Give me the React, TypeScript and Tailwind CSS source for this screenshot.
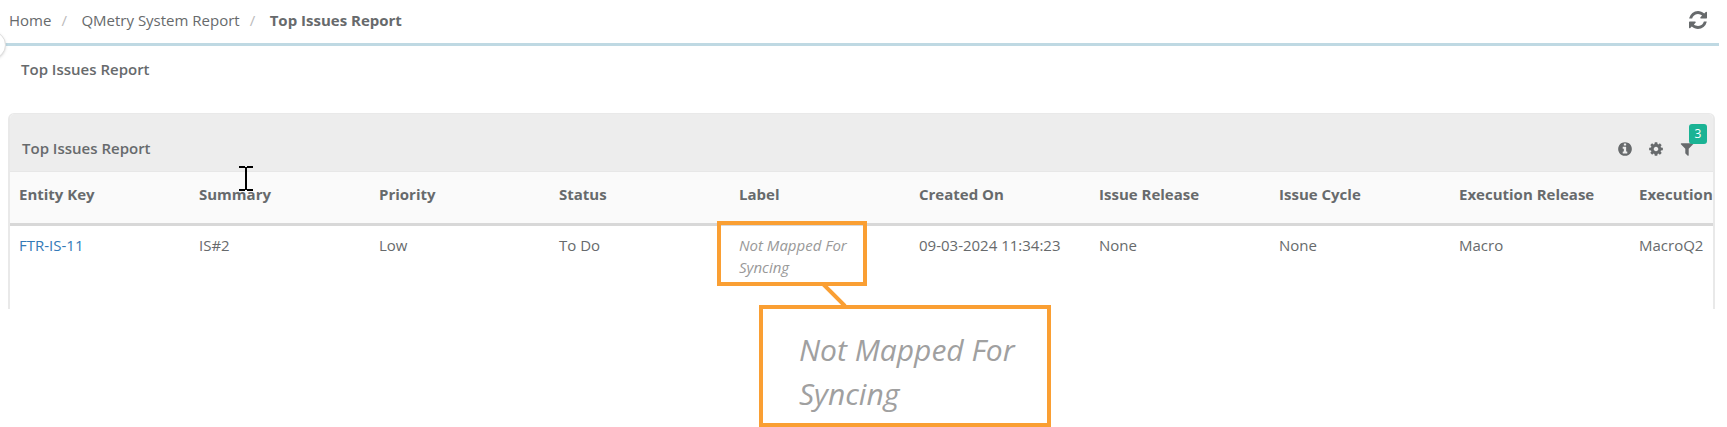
import type { ReactNode } from 'react';

type Column = { key: string; label: string };

const columns: Column[] = [
  { key: 'entityKey', label: 'Entity Key' },
  { key: 'summary', label: 'Summary' },
  { key: 'priority', label: 'Priority' },
  { key: 'status', label: 'Status' },
  { key: 'label', label: 'Label' },
  { key: 'createdOn', label: 'Created On' },
  { key: 'issueRelease', label: 'Issue Release' },
  { key: 'issueCycle', label: 'Issue Cycle' },
  { key: 'executionRelease', label: 'Execution Release' },
  { key: 'execution', label: 'Execution' },
];

const issues: Record<string, string>[] = [
  {
    entityKey: 'FTR-IS-11',
    summary: 'IS#2',
    priority: 'Low',
    status: 'To Do',
    label: 'Not Mapped For Syncing',
    createdOn: '09-03-2024 11:34:23',
    issueRelease: 'None',
    issueCycle: 'None',
    executionRelease: 'Macro',
    execution: 'MacroQ2',
  },
];

function Icon({ path, viewBox = '0 0 1792 1792', className }: { path: string; viewBox?: string; className: string }) {
  return (
    <svg className={className} viewBox={viewBox} fill="currentColor" aria-hidden="true">
      <path d={path} />
    </svg>
  );
}

const refreshPath =
  'M1511 928q0 5-1 7-64 268-268 434.5t-478 166.5q-146 0-282.5-55t-243.5-157l-129 129q-19 19-45 19t-45-19-19-45v-448q0-26 19-45t45-19h448q26 0 45 19t19 45-19 45l-137 137q71 66 161 102t187 36q134 0 250-65t186-179q11-17 53-117 8-23 30-23h192q13 0 22.5 9.5t9.5 22.5zm25-800v448q0 26-19 45t-45 19h-448q-26 0-45-19t-19-45 19-45l138-138q-148-137-349-137-134 0-250 65t-186 179q-11 17-53 117-8 23-30 23h-199q-13 0-22.5-9.5t-9.5-22.5v-7q65-268 270-434.5t480-166.5q146 0 284 55.5t245 156.5l130-129q19-19 45-19t45 19 19 45z';
const infoPath =
  'M1152 1376v-160q0-14-9-23t-23-9h-96v-512q0-14-9-23t-23-9h-320q-14 0-23 9t-9 23v160q0 14 9 23t23 9h96v320h-96q-14 0-23 9t-9 23v160q0 14 9 23t23 9h448q14 0 23-9t9-23zm-128-896v-160q0-14-9-23t-23-9h-192q-14 0-23 9t-9 23v160q0 14 9 23t23 9h192q14 0 23-9t9-23zm640 416q0 209-103 385.5t-279.5 279.5-385.5 103-385.5-103-279.5-279.5-103-385.5 103-385.5 279.5-279.5 385.5-103 385.5 103 279.5 279.5 103 385.5z';
const cogPath =
  'M1152 896q0-106-75-181t-181-75-181 75-75 181 75 181 181 75 181-75 75-181zm512-109v222q0 12-8 23t-20 13l-185 28q-19 54-39 91 35 50 107 138 10 12 10 25t-9 23q-27 37-99 108t-94 71q-12 0-26-9l-138-108q-44 23-91 38-16 136-29 186-7 28-36 28h-222q-14 0-24.5-8.5t-11.5-21.5l-28-184q-49-16-90-37l-141 107q-10 9-25 9-14 0-25-11-126-114-165-168-7-10-7-23 0-12 8-23 15-21 51-66.5t54-70.5q-27-50-41-99l-183-27q-13-2-21-12.5t-8-23.5v-222q0-12 8-23t19-13l186-28q14-46 39-92-40-57-107-138-10-12-10-24 0-10 9-23 26-36 98.5-107.5t94.5-71.5q13 0 26 10l138 107q44-23 91-38 16-136 29-186 7-28 36-28h222q14 0 24.5 8.5t11.5 21.5l28 184q49 16 90 37l142-107q9-9 24-9 13 0 25 10 129 119 165 170 7 8 7 22 0 12-8 23-15 21-51 66.5t-54 70.5q26 50 41 98l183 28q13 2 21 12.5t8 23.5z';
const filterPath =
  'M1595 295q17 41-14 70l-493 493v742q0 42-39 59-13 5-25 5-27 0-45-19l-256-256q-19-19-19-45v-486l-493-493q-31-29-14-70 17-39 59-39h1280q42 0 59 39z';

function Breadcrumb() {
  return (
    <nav aria-label="Breadcrumb">
      <ol className="flex items-center">
        <li>
          <a href="#home">Home</a>
        </li>
        <li className="w-[30px] pl-[10px] text-[#bbb]" aria-hidden="true">/</li>
        <li>
          <a href="#system-report">QMetry System Report</a>
        </li>
        <li className="w-[30px] pl-[10px] text-[#bbb]" aria-hidden="true">/</li>
        <li className="font-bold" aria-current="page">Top Issues Report</li>
      </ol>
    </nav>
  );
}

function renderCell(key: string, value: string): ReactNode {
  if (key === 'entityKey') {
    return <a href="#issue" className="text-[#337ab7]">{value}</a>;
  }
  if (key === 'label') {
    return <em className="block w-32 text-[#999]">{value}</em>;
  }
  return value;
}

function IssuesTable() {
  return (
    <table className="w-[1800px] table-fixed border-collapse text-left">
      <thead>
        <tr className="h-[52px] border-b-3 border-[#d8d8d8] bg-[#fafafa] align-top">
          {columns.map((col) => (
            <th key={col.key} className="px-[9px] pt-[11px] font-bold whitespace-nowrap">{col.label}</th>
          ))}
        </tr>
      </thead>
      <tbody>
        {issues.map((issue) => (
          <tr key={issue.entityKey} className="h-[85px] align-top">
            {columns.map((col) => (
              <td key={col.key} className="px-[9px] pt-2">{renderCell(col.key, issue[col.key])}</td>
            ))}
          </tr>
        ))}
      </tbody>
    </table>
  );
}

// Orange frame round the label cell plus its enlarged copy
function LabelCallout() {
  return (
    <div className="pointer-events-none absolute top-[108px] left-[709px]">
      <div className="h-[65px] w-[150px] border-4 border-[#fa9f33]" />
      <svg className="ml-[100px] block h-[19px] w-8" viewBox="0 0 32 19" fill="none" aria-hidden="true">
        <path d="M6 -2L28 20" stroke="#fa9f33" strokeWidth="4" />
      </svg>
      <div className="ml-[42px] h-[122px] w-[292px] border-4 border-[#fa9f33] bg-white pt-[19px] pl-9">
        <p className="w-[232px] text-[30px] leading-[44px] text-[#a0a0a0] italic">Not Mapped For Syncing</p>
      </div>
    </div>
  );
}

function TextCursor() {
  return (
    <svg className="pointer-events-none absolute top-[53px] left-[231px] h-[25px] w-[14px]" viewBox="0 0 14 25" fill="none" aria-hidden="true">
      <path d="M0 1H6M8 1H14M7 1V24M0 24H6M8 24H14" stroke="#000" strokeWidth="2" />
    </svg>
  );
}

export default function App() {
  return (
    <div className="relative bg-white pb-[118px] font-['Open_Sans','Noto_Sans',sans-serif] text-[15px] leading-[22px] text-[#676a6c]">
      <header className="mr-2 flex h-[46px] items-center justify-between border-b-3 border-[#bfd9e3] pr-3 pb-1 pl-[9px]">
        <Breadcrumb />
        <button type="button" aria-label="Refresh">
          <Icon path={refreshPath} viewBox="0 0 1536 1536" className="size-[18px]" />
        </button>
      </header>
      <span className="absolute top-[31px] -left-[22px] size-7 rounded-full border border-[#ddd] bg-white shadow" />

      <h1 className="h-[67px] pt-3 pl-[21px] font-semibold">Top Issues Report</h1>

      <div className="relative mr-3 ml-2">
        <section className="overflow-hidden rounded-t-md border-x-2 border-t-1 border-[#e9e9e9]">
          <div className="flex h-[58px] items-start justify-between border-b border-[#e7e7e7] bg-[#ededed] pt-[23px] pr-[18px] pl-3">
            <h2 className="font-semibold">Top Issues Report</h2>
            <div className="flex gap-[15px] pt-1">
              <button type="button" aria-label="Information">
                <Icon path={infoPath} className="size-4" />
              </button>
              <button type="button" aria-label="Settings">
                <Icon path={cogPath} className="size-4" />
              </button>
              <button type="button" aria-label="Filters, 3 applied" className="relative">
                <Icon path={filterPath} className="size-4" />
                <span className="absolute -top-[17px] left-[10px] h-5 w-[18px] rounded-[3px] bg-[#1ab394] text-xs leading-5 text-white">3</span>
              </button>
            </div>
          </div>
          <IssuesTable />
        </section>
        <LabelCallout />
        <TextCursor />
      </div>
    </div>
  );
}
